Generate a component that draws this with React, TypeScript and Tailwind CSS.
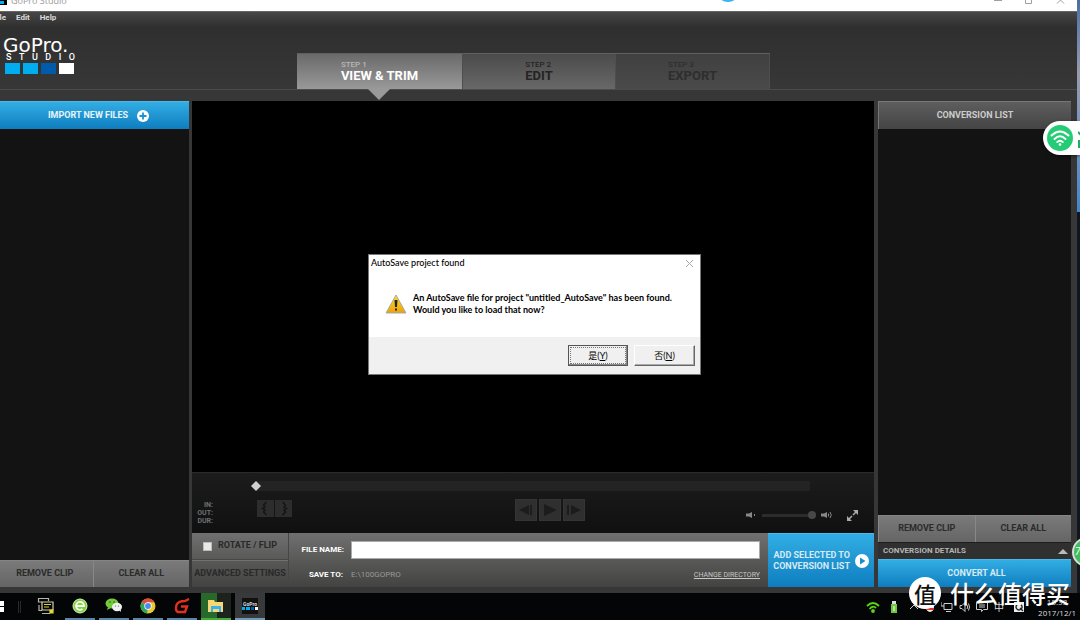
import React, { useState } from "react";

const din = "font-[Roboto,'Liberation_Sans',sans-serif]";
const greyButton =
  "flex-1 bg-linear-to-b from-[#7a7a7a] to-[#656565] text-[9px] font-bold text-[#2b2b2b] border-l border-[#888] border-t border-t-[#858585]";
const frameButton = "h-[22px] w-[22px] border border-[#353535] bg-[#2f2f2f]";

interface Step {
  label: string;
  name: string;
  className: string;
  labelClass: string;
}

const steps: Step[] = [
  {
    label: "STEP 1",
    name: "VIEW & TRIM",
    className: "w-[166px] from-[#6a6a6a] to-[#999] text-white",
    labelClass: "text-[#b8b8b8]",
  },
  {
    label: "STEP 2",
    name: "EDIT",
    className: "w-[153px] from-[#4b4b4b] to-[#686868] text-[#242424]",
    labelClass: "text-[#242424]",
  },
  {
    label: "STEP 3",
    name: "EXPORT",
    className: "w-[154px] from-[#404040] to-[#4a4a4a] text-[#2e2e2e]",
    labelClass: "text-[#2e2e2e]",
  },
];

function TitleBar() {
  return (
    <div className="flex h-[11px] shrink-0 items-start overflow-hidden bg-white">
      <div className="flex h-[5px] w-[7px] items-end gap-px bg-black pb-px">
        <span className="h-[3px] w-1 bg-[#00aeef]" />
      </div>
      <span className="-mt-1 ml-1 font-['Open_Sans',sans-serif] text-[9px] leading-[10px] text-[#9a9a9a]">
        GoPro Studio
      </span>
      <svg width="120" height="11" className="ml-auto shrink-0" fill="none" stroke="#a0a0a0">
        <path d="M37 0.5h8M68.500 0v3.500h6V0M100 3.500l7-7M107 3.500l-7-7" />
      </svg>
    </div>
  );
}

function Logo() {
  return (
    <div className="w-[75px] pl-[3px] text-white">
      <div className="font-['DejaVu_Sans',sans-serif] text-[20px] leading-[14px]">GoPro.</div>
      <div className="flex justify-between pl-[3px] text-[9px] leading-[10px] font-medium">
        {"STUDIO".split("").map((c, i) => (
          <span key={i}>{c}</span>
        ))}
      </div>
      <div className="mt-px flex gap-[3px] pr-px pl-[2px]">
        <span className="h-[11px] flex-1 bg-[#00aeef]" />
        <span className="h-[11px] flex-1 bg-[#00aeef]" />
        <span className="h-[11px] flex-1 bg-[#005baa]" />
        <span className="h-[11px] flex-1 bg-white" />
      </div>
    </div>
  );
}

function Header() {
  return (
    <header className="h-[79px] shrink-0 border-t border-b border-t-[#666] border-b-[#4c4c4c] bg-linear-to-b from-[#474747] via-[#2f2f2f] via-20% to-[#373737]">
      <nav className="flex h-[12px] items-center gap-[10px] text-[8px] font-bold text-[#dcdcdc]">
        <button className="-ml-[7px]">File</button>
        <button>Edit</button>
        <button>Help</button>
      </nav>
      <div className="flex h-[65px] items-start">
        <div className="w-[297px] shrink-0 pt-[14px]">
          <Logo />
        </div>
        <div className="mt-auto flex h-[36px]">
          {steps.map((s, i) => (
            <button
              key={s.label}
              className={`relative flex items-center justify-center border-t border-r border-t-[#606060] border-r-[#4e4e4e] bg-linear-to-b text-left ${s.className}`}
            >
              <span className="flex flex-col">
                <span className={`text-[8px] leading-[8px] font-medium ${s.labelClass}`}>{s.label}</span>
                <span className="text-[13px] leading-[13px] font-bold">{s.name}</span>
              </span>
              {i === 0 && (
                <svg width="22" height="11" className="absolute top-full left-[71px] z-10">
                  <path d="M0 0h22L11 11z" fill="#999" />
                </svg>
              )}
            </button>
          ))}
        </div>
      </div>
    </header>
  );
}

function ImportPanel() {
  return (
    <aside className="flex w-[189px] shrink-0 flex-col bg-[#131313]">
      <button className="flex h-[28px] items-center justify-center gap-[9px] border-t border-[#4db9ea] bg-linear-to-b from-[#32aee4] to-[#0d7dbf] pl-2 text-[9px] font-bold text-[#e8f4fb]">
        IMPORT NEW FILES
        <svg width="12" height="12" viewBox="0 0 12 12">
          <circle cx="6" cy="6" r="6" fill="#fff" />
          <path d="M6 2.500v7M2.500 6h7" stroke="#1b93d2" strokeWidth="1.800" />
        </svg>
      </button>
      <div className="flex-1" />
      <div className="-ml-1 flex h-[27px]">
        <button className={greyButton}>REMOVE CLIP</button>
        <button className={greyButton}>CLEAR ALL</button>
      </div>
    </aside>
  );
}

function Transport() {
  const [volume, setVolume] = useState(100);

  return (
    <div className="h-[61px] shrink-0 border-t border-[#2a2a2a] bg-linear-to-b from-[#1c1c1c] to-[#101010]">
      <div className="flex h-[26px] items-center pr-[64px] pl-[59px]">
        <svg width="10" height="10" viewBox="0 0 10 10" className="z-10 shrink-0">
          <path d="M5 0l5 5-5 5-5-5z" fill="#cfcfcf" />
        </svg>
        <div className="-ml-1 h-[10px] flex-1 bg-[#232323]" />
      </div>
      <div className="flex items-start">
        <dl className="w-[21px] pt-[2px] text-right text-[7px] leading-[8px] font-bold text-[#707070]">
          <dt>IN:</dt>
          <dt>OUT:</dt>
          <dt>DUR:</dt>
        </dl>
        <div className="ml-[44px] flex gap-px pt-px">
          <button aria-label="Set in point" className="h-[17px] w-[17px] bg-[#2d2d2d]">
            <svg width="17" height="17" fill="none" stroke="#151515" strokeWidth="1.500">
              <path d="M9.500 2L6.500 5L8 7L5.500 8.500L8 10L6.500 12L9.500 15" />
            </svg>
          </button>
          <button aria-label="Set out point" className="h-[17px] w-[17px] bg-[#2d2d2d]">
            <svg width="17" height="17" fill="none" stroke="#151515" strokeWidth="1.500">
              <path d="M7.500 2L10.500 5L9 7L11.500 8.500L9 10L10.500 12L7.500 15" />
            </svg>
          </button>
        </div>
        <div className="flex flex-1 justify-center gap-[2px] pl-[78px]">
          <button aria-label="Previous frame" className={frameButton}>
            <svg width="20" height="20" fill="#1c1c1c">
              <path d="M3 10l10-5v10zM14 5h2v10h-2z" />
            </svg>
          </button>
          <button aria-label="Play" className={frameButton}>
            <svg width="20" height="20" fill="#1c1c1c">
              <path d="M4 4l13 6-13 6z" />
            </svg>
          </button>
          <button aria-label="Next frame" className={frameButton}>
            <svg width="20" height="20" fill="#1c1c1c">
              <path d="M3 5h2v10H3zM7 5l10 5-10 5z" />
            </svg>
          </button>
        </div>
        <div className="flex h-[32px] w-[144px] shrink-0 items-center">
          <svg width="10" height="8" className="ml-[16px]" fill="#888" stroke="#888">
            <path d="M0 2.500h3l3-1.500v6L3 5.500H0z" stroke="none" />
            <path d="M8.500 3v2" fill="none" />
          </svg>
          <label className="relative ml-[6px] flex h-[8px] w-[54px] items-center">
            <span className="absolute inset-x-0 h-[3px] bg-[#2c2c2c]" />
            <input
              type="range"
              aria-label="Volume"
              value={volume}
              onChange={(e) => setVolume(Number(e.target.value))}
              className="relative h-[8px] w-full appearance-none bg-transparent [&::-webkit-slider-thumb]:h-[8px] [&::-webkit-slider-thumb]:w-[8px] [&::-webkit-slider-thumb]:appearance-none [&::-webkit-slider-thumb]:rounded-full [&::-webkit-slider-thumb]:bg-[#484848]"
            />
          </label>
          <svg width="12" height="8" className="ml-[5px]" fill="#888" stroke="#888">
            <path d="M0 2.500h3l3-1.500v6L3 5.500H0z" stroke="none" />
            <path d="M7.500 2.500v3M9 1q2.500 3 0 6" fill="none" />
          </svg>
          <button aria-label="Full screen" className="ml-[14px]">
            <svg width="11" height="11" viewBox="0 0 11 11" fill="#aaa" stroke="#aaa">
              <path d="M6 0h5v5zM0 6v5h5z" stroke="none" />
              <path d="M6 5l3-3M5 6L2 9" strokeWidth="1.500" />
            </svg>
          </button>
        </div>
      </div>
    </div>
  );
}

function ClipSettings() {
  const [rotate, setRotate] = useState(false);
  const [fileName, setFileName] = useState("");

  return (
    <div className="flex h-[54px] shrink-0 bg-linear-to-b from-[#707070] to-[#434341]">
      <div className="flex w-[97px] shrink-0 flex-col border-r border-[#464646] text-[9px] font-bold text-[#292929]">
        <label className="flex flex-1 items-center justify-center gap-[6px] border-b border-[#484848]">
          <input
            type="checkbox"
            checked={rotate}
            onChange={(e) => setRotate(e.target.checked)}
            className="h-[9px] w-[9px] appearance-none border border-[#bbb] bg-[#e8e8e8] checked:bg-[#1b93d2]"
          />
          ROTATE / FLIP
        </label>
        <button className="flex-1 border-t border-[#707070] whitespace-nowrap">ADVANCED SETTINGS</button>
      </div>
      <div className="flex flex-1 flex-col pt-2 pr-2 text-[9px] font-bold text-white">
        <div className="flex h-[18px] items-center gap-[7px]">
          <label htmlFor="file-name" className="w-[55px] text-right text-[8px]">
            FILE NAME:
          </label>
          <input
            id="file-name"
            value={fileName}
            onChange={(e) => setFileName(e.target.value)}
            className="h-[18px] min-w-0 flex-1 border border-[#aaa] bg-white px-1 text-black"
          />
        </div>
        <div className="mt-2 flex h-[16px] items-center gap-[8px] text-[8px]">
          <span className="w-[54px] text-right">SAVE TO:</span>
          <span className="font-normal text-[#999]">E:\100GOPRO</span>
          <a href="#directory" className="ml-auto text-[7px] font-normal text-[#c8c8c8] underline">
            CHANGE DIRECTORY
          </a>
        </div>
      </div>
      <button className="flex w-[106px] shrink-0 items-center justify-end gap-[5px] border-t border-[#4db9ea] bg-linear-to-b from-[#32aee4] to-[#0d7dbf] pr-[5px] text-right text-[9px] leading-[11px] font-bold text-[#d6eaf5]">
        <span className="whitespace-nowrap">
          ADD SELECTED TO
          <br />
          CONVERSION LIST
        </span>
        <svg width="14" height="14" viewBox="0 0 14 14" className="shrink-0">
          <circle cx="7" cy="7" r="7" fill="#fff" />
          <path d="M5 3.500l5.500 3.500L5 10.500z" fill="#1b8fce" />
        </svg>
      </button>
    </div>
  );
}

function ConversionPanel() {
  return (
    <aside className="ml-px flex w-[193px] shrink-0 flex-col bg-[#131313]">
      <h2 className="flex h-[28px] items-center justify-center border-t border-l border-[#777] bg-linear-to-b from-[#5e5e5e] to-[#444] text-[9px] font-bold text-[#ccc]">
        CONVERSION LIST
      </h2>
      <div className="flex-1" />
      <div className="flex h-[27px]">
        <button className={greyButton}>REMOVE CLIP</button>
        <button className={greyButton}>CLEAR ALL</button>
      </div>
      <button className="flex h-[17px] items-center justify-between border-t border-[#1d1d1d] bg-[#303030] pr-[3px] pl-[5px] text-[8px] font-bold text-[#b5b5b5]">
        CONVERSION DETAILS
        <svg width="10" height="5">
          <path d="M5 0l5 5H0z" fill="#bbb" />
        </svg>
      </button>
      <button className="h-[28px] border-t border-[#4db9ea] bg-linear-to-b from-[#32aee4] to-[#0d7dbf] pl-1 text-[9px] font-bold text-[#d6eaf5]">
        CONVERT ALL
      </button>
    </aside>
  );
}

function AutoSaveDialog({ onClose }: { onClose: () => void }) {
  return (
    <div
      role="dialog"
      aria-labelledby="autosave-title"
      className="absolute top-[153px] left-[176px] w-[333px] border border-[#777] bg-white font-[Lato,'Noto_Sans_CJK_SC',sans-serif] text-black"
    >
      <div className="flex h-[16px] items-center justify-between pr-[7px] pl-[2px]">
        <h2 id="autosave-title" className="text-[9px] font-medium">
          AutoSave project found
        </h2>
        <button aria-label="Close" onClick={onClose}>
          <svg width="7" height="7" stroke="#aaa">
            <path d="M0 0l7 7M7 0L0 7" />
          </svg>
        </button>
      </div>
      <div className="flex h-[66px] items-center gap-[6px] pl-[16px]">
        <svg width="22" height="20" viewBox="0 0 22 20">
          <defs>
            <linearGradient id="warn" x2="0" y2="1">
              <stop offset="0" stopColor="#ffe21a" />
              <stop offset="1" stopColor="#e9a012" />
            </linearGradient>
          </defs>
          <path d="M11 1l10 18H1z" fill="url(#warn)" stroke="#a9a9a0" strokeLinejoin="round" />
          <path d="M9.500 6h3L12 13h-2zM10 14.500h2v2h-2z" fill="#222" />
        </svg>
        <p className="text-[9px] leading-[12px] font-bold whitespace-nowrap">
          An AutoSave file for project "untitled_AutoSave" has been found.
          <br />
          Would you like to load that now?
        </p>
      </div>
      <div className="flex h-[37px] items-center justify-end gap-[6px] bg-[#f0f0f0] pr-[5px] text-[9px]">
        <button
          onClick={onClose}
          className="h-[21px] w-[60px] border border-[#555] bg-[#f0f0f0] p-px shadow-[inset_-1px_-1px_#888]"
        >
          <span className="flex h-full items-center justify-center border border-dotted border-[#777]">
            是(<u>Y</u>)
          </span>
        </button>
        <button
          onClick={onClose}
          className="h-[21px] w-[61px] border border-t-[#fff] border-r-[#666] border-b-[#666] border-l-[#fff] bg-[#f0f0f0] shadow-[inset_-1px_-1px_#aaa]"
        >
          否(<u>N</u>)
        </button>
      </div>
    </div>
  );
}

const tile = "flex h-full w-[30px] items-center justify-center border-b-2";

function Taskbar() {
  return (
    <footer className="flex h-[27px] shrink-0 items-center gap-1 overflow-hidden bg-[#030506] pr-1">
      <button aria-label="Start" className="w-[10px]">
        <svg width="4" height="11" fill="#fff">
          <path d="M0 0h4v5H0zM0 6h4v5H0z" />
        </svg>
      </button>
      <div className="flex w-[13px] justify-start pl-1">
        <span className="h-3 w-[3px] border-x border-[#2a2a2a]" />
      </div>
      <button aria-label="Remote desktop" className={`${tile} border-transparent`}>
        <svg width="18" height="18" fill="none" stroke="#b5b5ac" strokeWidth="1.200">
          <path d="M5 5H1.500V1.500h10V4M2 8v5.500h3M5 16.500h8" />
          <path d="M5 5h11v8H5z" stroke="#d5d2a0" />
          <path d="M7 7.500h7M7 10h5" stroke="#d9d433" />
          <path d="M13 13h3v3h-3z" fill="#e8d433" stroke="#e8d433" />
        </svg>
      </button>
      <button aria-label="Browser" className={`${tile} border-[#5b86a8]`}>
        <svg width="16" height="16" viewBox="0 0 16 16">
          <circle cx="8" cy="8" r="7" fill="#7ed63a" stroke="#d8f5b8" />
          <path d="M4 8h8A4 4 0 1 0 10.500 11" fill="none" stroke="#fff" strokeWidth="1.800" />
        </svg>
      </button>
      <button aria-label="WeChat" className={`${tile} border-[#5b86a8]`}>
        <svg width="18" height="15" viewBox="0 0 18 15">
          <ellipse cx="7" cy="5.500" rx="6.500" ry="5" fill="#74c93c" />
          <path d="M3 9l-1 3 4-2z" fill="#74c93c" />
          <ellipse cx="12" cy="9" rx="5" ry="4.200" fill="#f1f1f1" />
          <path d="M14 12l2 2-.3-3z" fill="#f1f1f1" />
          <circle cx="5" cy="4" r=".8" fill="#245a10" />
          <circle cx="9" cy="4" r=".8" fill="#245a10" />
          <circle cx="10.500" cy="8" r=".6" fill="#555" />
          <circle cx="13.500" cy="8" r=".6" fill="#555" />
        </svg>
      </button>
      <button aria-label="Chrome" className={`${tile} border-[#5b86a8]`}>
        <svg width="16" height="16" viewBox="0 0 16 16">
          <circle cx="8" cy="8" r="7.500" fill="#e9c92f" />
          <path d="M8 8L1.500 4.250A7.500 7.500 0 0 1 14.500 4.250H8z" fill="#dd4b3e" />
          <path d="M8 8l-1 7.400A7.500 7.500 0 0 1 1.500 4.250z" fill="#2da55c" />
          <circle cx="8" cy="8" r="3.700" fill="#fff" />
          <circle cx="8" cy="8" r="2.900" fill="#4a8af4" />
        </svg>
      </button>
      <button aria-label="Music" className={`${tile} border-[#5b86a8]`}>
        <svg width="16" height="16" fill="none" stroke="#e3301d" strokeWidth="2.400">
          <path d="M15 1L11 3Q4 3 2.500 7Q1 13 4 14H11L13 8.500H7" />
        </svg>
      </button>
      <button
        aria-label="File Explorer"
        className={`${tile} border-[#3fae3a] bg-linear-to-r from-[#29682b] from-55% to-[#1d221d] to-55%`}
      >
        <svg width="16" height="14" viewBox="0 0 16 14">
          <path d="M0 1h6l1 2h8v10H0z" fill="#f7d673" />
          <path d="M3 7h10v6h-2v-3H5v3H3z" fill="#35b3ee" />
        </svg>
      </button>
      <button aria-label="GoPro Studio" className={`${tile} border-[#6f9ab8] bg-[#38393b]`}>
        <span className="flex h-4 w-4 flex-col justify-end bg-[#111] pb-1">
          <span className="text-center text-[5px] leading-[6px] font-bold text-[#ddd]">GoPro</span>
          <span className="flex gap-px">
            <span className="h-[3px] flex-1 bg-[#00aeef]" />
            <span className="h-[3px] flex-1 bg-[#00aeef]" />
            <span className="h-[3px] flex-1 bg-[#005baa]" />
            <span className="h-[3px] flex-1 bg-white" />
          </span>
        </span>
      </button>
      <div className="ml-auto flex items-center gap-[6px] text-[#ddd]">
        <svg width="14" height="12" fill="none" stroke="#5bd413" strokeWidth="1.800">
          <path d="M1 5Q7-1 13 5M3.500 8Q7 4 10 7" />
          <circle cx="7" cy="10" r="1" fill="#5bd413" />
        </svg>
        <svg width="16" height="12">
          <path d="M6 0h4v3H6z" fill="#ddd" />
          <path d="M5 3h6v9H5z" fill="#6cc93b" />
          <path d="M8 5v5" stroke="#fff" />
        </svg>
        <svg width="12" height="12" fill="none" stroke="#ccc">
          <path d="M2 8l4-4 4 4" />
        </svg>
        <svg width="9" height="12" className="shrink-0">
          <ellipse cx="4" cy="6" rx="4" ry="5" fill="#eee" />
          <path d="M0 7h8v2H0z" fill="#d8342a" />
        </svg>
        <svg width="12" height="12" fill="none" stroke="#ccc">
          <path d="M3 2.500h8v6H3zM5 10.500h5M0 1v4h3" />
        </svg>
        <svg width="11" height="12" fill="none" stroke="#ccc">
          <path d="M1 4.500h2l3-3v9l-3-3H1zM8 4q1.500 2 0 4M9.500 2.500q2 3.500 0 7" />
        </svg>
        <svg width="12" height="12" fill="none" stroke="#ccc">
          <path d="M.5 1.500h11v7h-4l-2 2v-2h-5zM3 4h6M3 6h6" />
        </svg>
        <span className="font-['Noto_Sans_CJK_SC',sans-serif] text-[10px] leading-[12px]">中</span>
        <svg width="10" height="10" className="ml-1 shrink-0">
          <path d="M0 0h10v10H0z" fill="#eee" />
          <path d="M5 2a3 3 0 1 0 .1 0M6 6l3 3" fill="none" stroke="#222" strokeWidth="1.400" />
        </svg>
        <time className="ml-2 flex flex-col items-center font-['Open_Sans',sans-serif] text-[8px] leading-[11px]">
          <span>15:33</span>
          <span>2017/12/1</span>
        </time>
      </div>
    </footer>
  );
}

function Watermark() {
  return (
    <div className="pointer-events-none absolute right-[10px] bottom-[11px] z-30 flex items-center gap-[9px] font-['Noto_Sans_CJK_SC',sans-serif]">
      <span className="flex h-[32px] w-[32px] items-center justify-center rounded-full bg-white text-[22px] leading-[32px] font-medium text-[#111]">
        值
      </span>
      <span className="text-[24px] leading-[32px] font-medium text-white">什么值得买</span>
    </div>
  );
}

function WifiWidget() {
  return (
    <div className="absolute top-[121px] right-0 z-20 flex h-[34px] w-[37px] items-center gap-[5px] overflow-hidden rounded-l-full bg-white pl-1 shadow-[0_1px_3px_#0008]">
      <svg width="26" height="26" viewBox="0 0 26 26" className="shrink-0">
        <circle cx="13" cy="13" r="13" fill="#26cc75" />
        <g fill="none" stroke="#fff" strokeWidth="2" strokeLinecap="round">
          <path d="M4.500 10.500Q13 2.500 21.500 10.500M7.500 14Q13 8.500 18.500 14M10.300 17Q13 14.500 15.700 17" />
        </g>
        <circle cx="13" cy="19.500" r="1.300" fill="#fff" />
      </svg>
      <svg width="8" height="24" className="shrink-0" fill="none" stroke="#26a866" strokeWidth="2">
        <path d="M3 2v6M0 6l3 3 3-3M1 15h6v6H1z" />
      </svg>
    </div>
  );
}

export default function App() {
  const [dialogOpen, setDialogOpen] = useState(true);

  return (
    <div className={`relative flex h-screen flex-col overflow-hidden bg-[#10151f] ${din}`}>
      <div className="flex min-h-0 flex-1">
        <div className="flex min-w-0 flex-1 flex-col overflow-hidden bg-[#373737]">
          <TitleBar />
          <Header />
          <main className="mt-[11px] mb-[6px] flex min-h-0 flex-1 gap-[3px] pr-[6px]">
            <ImportPanel />
            <section className="relative flex min-w-0 flex-1 flex-col">
              <div className="flex-1 bg-black" />
              <Transport />
              <ClipSettings />
              {dialogOpen && <AutoSaveDialog onClose={() => setDialogOpen(false)} />}
            </section>
            <ConversionPanel />
          </main>
        </div>
        <div className="flex w-[3px] shrink-0 flex-col">
          <div className="h-[212px] bg-linear-to-b from-[#4a6ea8] via-[#9a9aae] via-35% to-[#3f86cc]" />
        </div>
      </div>
      <Taskbar />
      <div className="absolute -top-[22px] left-[716px] h-[24px] w-[24px] rounded-full bg-[#35b5f5]" />
      <WifiWidget />
      <div className="absolute top-[537px] -right-[22px] z-20 h-[30px] w-[30px] rounded-full border-2 border-[#ddd] bg-[#3fbf5c] pl-px text-[10px] leading-[26px] text-white italic">
        7
      </div>
      <Watermark />
    </div>
  );
}
